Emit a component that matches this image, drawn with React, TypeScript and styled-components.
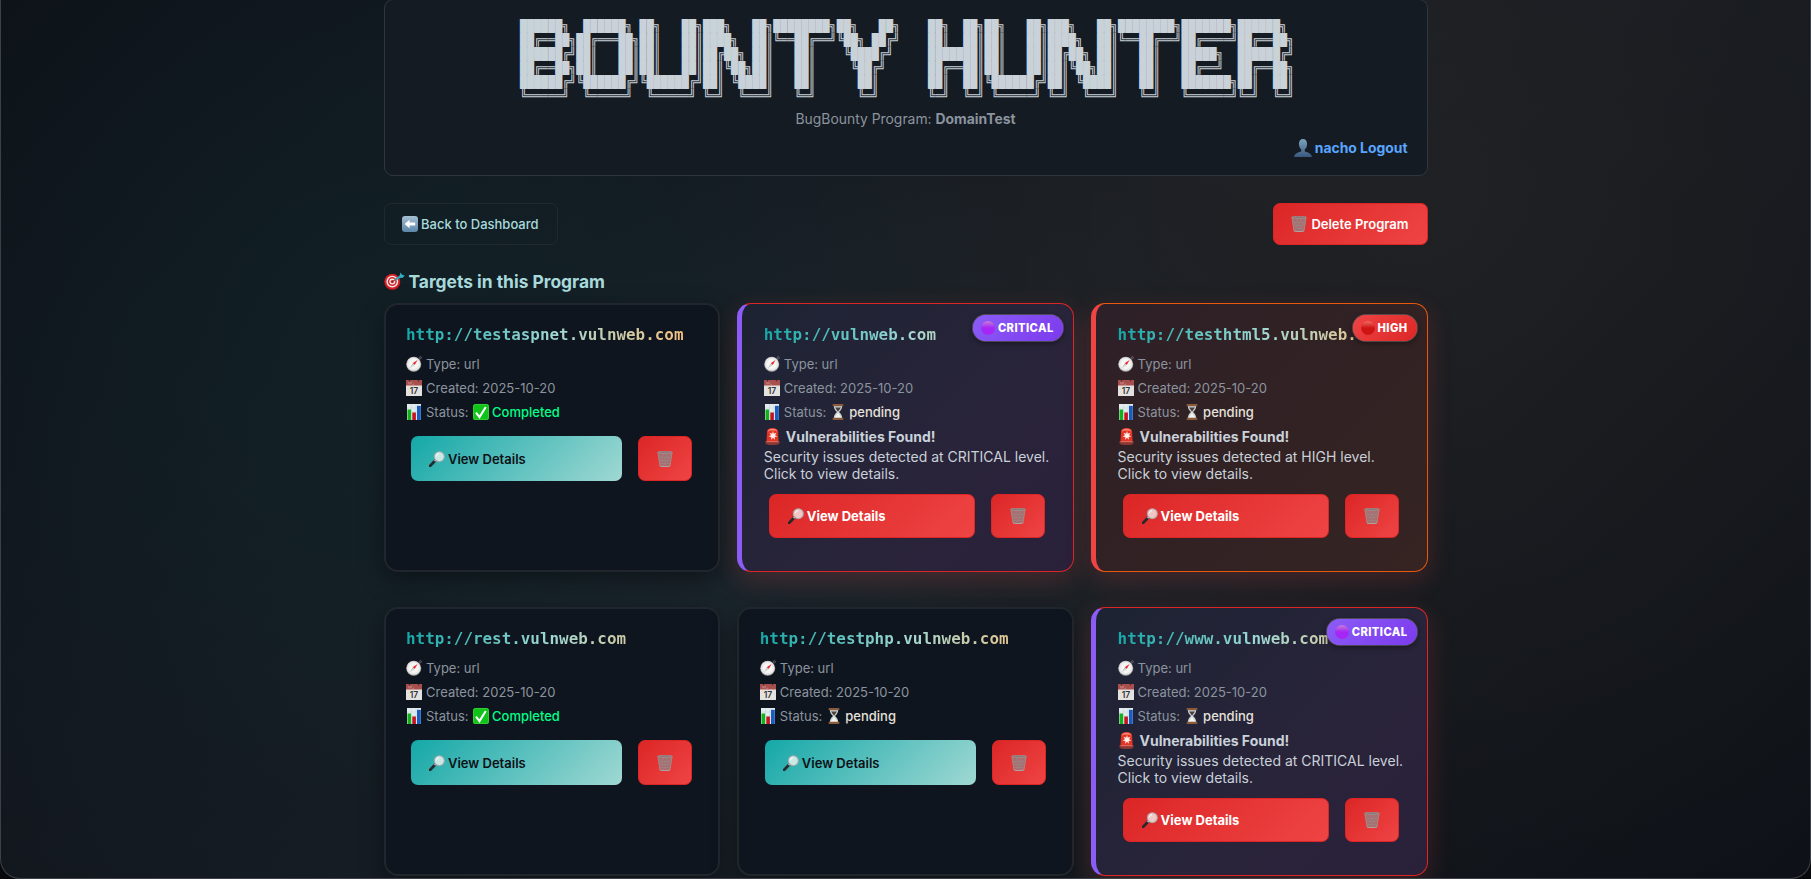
import React from 'react';
import styled, { createGlobalStyle, css } from 'styled-components';

const SANS = 'Inter, "Liberation Sans", sans-serif';
const MONO = '"DejaVu Sans Mono", "Liberation Mono", monospace';

const GlobalStyle = createGlobalStyle`
  * { box-sizing: border-box; }
  html, body { margin: 0; height: 100%; overflow: hidden; background: #08090c; }
  #root { height: 100%; }
`;

const Window = styled.div`
  height: 879px;
  border: 1px solid #3d4147;
  border-top: 0;
  border-radius: 0 0 20px 20px;
  overflow: hidden;
  font-family: ${SANS};
  color: #c9d1d9;
  background:
    radial-gradient(circle at 22% 42%, rgba(20, 170, 165, 0.075) 0%, transparent 42%),
    radial-gradient(circle at 80% 25%, rgba(255, 190, 120, 0.05) 0%, transparent 50%),
    radial-gradient(circle at 50% 80%, rgba(160, 215, 210, 0.05) 0%, transparent 50%),
    linear-gradient(135deg, #0d1117 0%, #161b22 50%, #0d1117 100%);
`;

const Container = styled.main`
  width: 1044px;
  margin: 0 auto;
`;

const Header = styled.header`
  height: 177px;
  margin-top: -1px;
  border: 1px solid #30363d;
  border-radius: 9px;
  background: #151b23;
  display: flex;
  flex-direction: column;
`;

const Banner = styled.pre`
  margin: 18.6px 0 0 135.5px;
  font-family: ${MONO};
  font-size: 11.7px;
  line-height: 14.04px;
  color: #c9d1d9;
`;

const ProgramLine = styled.p`
  margin: 6px 0 0;
  font-size: 13.9px;
  line-height: 20px;
  text-align: center;
  color: #8b949e;
`;

const UserLine = styled.div`
  display: flex;
  justify-content: flex-end;
  align-items: center;
  gap: 3px;
  margin: 9px 19px 0 0;
  height: 21px;
  font-size: 13.9px;
  font-weight: 700;
  color: #58a6ff;
`;

const Toolbar = styled.div`
  display: flex;
  justify-content: space-between;
  margin-top: 27px;
`;

const BackButton = styled.button`
  display: flex;
  align-items: center;
  gap: 3.5px;
  height: 42px;
  padding: 0 18px 0 17px;
  border: 1px solid #21282e;
  border-radius: 7px;
  background: transparent;
  color: #a8dadc;
  font: 500 13px ${SANS};
`;

const redFill = css`
  border: 1px solid #dc2626;
  background: linear-gradient(135deg, #dc2626, #ef4444);
  color: #fff;
`;

const DeleteProgramButton = styled.button`
  ${redFill}
  display: flex;
  align-items: center;
  gap: 4px;
  height: 42px;
  padding: 0 18px 0 17px;
  border-radius: 7px;
  font: 600 13px ${SANS};
`;

const SectionTitle = styled.h2`
  display: flex;
  align-items: center;
  gap: 4px;
  margin: 24px 0 0;
  height: 24px;
  font-size: 17.4px;
  font-weight: 700;
  color: #a8dadc;
`;

const Grid = styled.section`
  display: grid;
  grid-template-columns: repeat(3, 1fr);
  grid-auto-rows: 269px;
  gap: 35px 17.4px;
  margin-top: 9.5px;
`;

type Severity = 'none' | 'critical' | 'high';

const severityStyles = {
  none: css`
    padding: 0 20px 0 20.5px;
    border: 2px solid #21262d;
    background: #0f151e;
    box-shadow: 0 8px 24px rgba(0, 0, 0, 0.4);
  `,
  critical: css`
    padding: 1px 22px 0 21.5px;
    border: 1.5px solid #dc2626;
    border-left: 5px solid #8b5cf6;
    background: linear-gradient(135deg, #1d2333 0%, #29243a 60%, #2a203a 100%);
    box-shadow: 0 8px 26px rgba(239, 68, 68, 0.2);
  `,
  high: css`
    padding: 1px 22px 0 21.5px;
    border: 1.5px solid #ea580c;
    border-left: 5px solid #ef4444;
    background: linear-gradient(135deg, #2e2028 0%, #322223 60%, #352422 100%);
    box-shadow: 0 8px 26px rgba(239, 68, 68, 0.2);
  `,
};

const Card = styled.article<{ $severity: Severity }>`
  position: relative;
  display: flex;
  flex-direction: column;
  border-radius: 14px;
  ${({ $severity }) => severityStyles[$severity]}
`;

const Url = styled.h3`
  margin: 19.5px 0 6px;
  font: 700 15.9px/22px ${MONO};
  white-space: nowrap;
  color: transparent;
  background: linear-gradient(90deg, #14a8a8 0%, #a0d8d3 50%, #ffbe76 100%);
  background-clip: text;
  -webkit-background-clip: text;
`;

const Meta = styled.div`
  display: flex;
  align-items: center;
  gap: 4px;
  height: 24px;
  font-size: 13px;
  color: #8b949e;
`;

const Status = styled.span<{ $done: boolean }>`
  display: flex;
  align-items: center;
  gap: ${({ $done }) => ($done ? 3.5 : 3)}px;
  font-weight: 500;
  color: ${({ $done }) => ($done ? '#00ff88' : '#e6e1dc')};
`;

const AlertTitle = styled.div`
  display: flex;
  align-items: center;
  gap: 5px;
  height: 24px;
  font-size: 14px;
  font-weight: 700;
`;

const AlertText = styled.p`
  margin: 0;
  font-size: 14px;
  line-height: 17px;
`;

const Actions = styled.div`
  display: flex;
  gap: 16px;
  margin: 12px 6px 0 5px;
`;

const ViewButton = styled.button<{ $alert: boolean }>`
  flex: 1;
  display: flex;
  align-items: center;
  gap: 3px;
  height: 45px;
  padding: 0 18px;
  border: 0;
  border-radius: 7px;
  background: linear-gradient(135deg, #14a8a8, #a0d8d3);
  color: #0d1117;
  font: 600 13px ${SANS};
  ${({ $alert }) => $alert && css`${redFill} height: 44px; padding: 0 18px; font-weight: 700;`}
`;

const TrashButton = styled.button<{ $alert: boolean }>`
  ${redFill}
  display: flex;
  align-items: center;
  justify-content: center;
  width: 54px;
  height: ${({ $alert }) => ($alert ? 44 : 45)}px;
  padding: 0;
  border-radius: 7px;
`;

const Badge = styled.span<{ $severity: Severity }>`
  position: absolute;
  top: 10px;
  right: 9px;
  display: flex;
  align-items: center;
  gap: 3px;
  height: 28.5px;
  padding: 0 9px 0 8px;
  border: 1px solid rgba(255, 255, 255, 0.2);
  border-radius: 14px;
  background: ${({ $severity }) =>
    $severity === 'critical'
      ? 'linear-gradient(135deg, #8b5cf6, #7c3aed)'
      : 'linear-gradient(135deg, #ef4444, #dc2626)'};
  background-clip: padding-box;
  background-color: ${({ $severity }) => ($severity === 'critical' ? '#7c3aed' : '#dc2626')};
  box-shadow: 0 2px 5px rgba(0, 0, 0, 0.35);
  color: #fff;
  font-size: 11.2px;
  font-weight: 800;
  letter-spacing: 0.4px;
`;

const Icon = styled.svg<{ $size?: number }>`
  flex: none;
  display: block;
  width: ${({ $size }) => $size ?? 16}px;
  height: ${({ $size }) => $size ?? 16}px;
`;

const PersonIcon = () => (
  <Icon viewBox="0 0 18 18" $size={18}>
    <defs>
      <linearGradient id="person" x1="0" y1="0" x2="0" y2="1">
        <stop offset="0" stopColor="#7ba3bd" />
        <stop offset="1" stopColor="#39597d" />
      </linearGradient>
    </defs>
    <path fill="url(#person)" d="M9 0C6.4 0 4.8 2 4.9 5c.1 2.400 1 4.300 2.300 5.300v1.900c-1 1.100-6.600 1.200-7.100 5.800h17.800c-.5-4.600-6.100-4.700-7.100-5.800v-1.900c1.300-1 2.200-2.900 2.300-5.300C13.200 2 11.600 0 9 0z" />
  </Icon>
);

const BackIcon = () => (
  <Icon viewBox="0 0 16 16">
    <defs>
      <linearGradient id="back" x1="0" y1="0" x2="0" y2="1">
        <stop offset="0" stopColor="#a4bfd2" />
        <stop offset="1" stopColor="#5d86aa" />
      </linearGradient>
    </defs>
    <rect width="16" height="16" rx="3" fill="url(#back)" />
    <path d="M2.600 8l5-4.300v2.900h5.600v2.800H7.600v2.900z" fill="#fff" />
  </Icon>
);

const TargetIcon = () => (
  <Icon viewBox="0 0 21 18" style={{ width: 21, height: 18 }}>
    <circle cx="8.300" cy="10" r="8" fill="#b3141c" />
    <circle cx="8.300" cy="9.500" r="7.600" fill="#d8242b" />
    <circle cx="8.300" cy="9.600" r="5.900" fill="#f3e9e6" />
    <circle cx="8.300" cy="9.600" r="4.500" fill="#d8242b" />
    <circle cx="8.300" cy="9.600" r="3" fill="#f3e9e6" />
    <circle cx="8.300" cy="9.600" r="1.600" fill="#c61d25" />
    <path d="M8.300 9.600l8-5" stroke="#5c3b37" strokeWidth="1" />
    <path d="M11.500 7.600l5-3.200" stroke="#2aa7bd" strokeWidth="2" />
    <path d="M15.300 4.600L16.500.6l1.600 2.200 2.600.8-1.800 2.200-3 .2z" fill="#35a9bf" />
  </Icon>
);

const CompassIcon = () => (
  <Icon viewBox="0 0 16 16">
    <circle cx="14.300" cy="1.700" r="1.100" fill="none" stroke="#777c83" strokeWidth=".7" />
    <circle cx="7.700" cy="8.200" r="7.500" fill="#a9aaab" />
    <circle cx="7.700" cy="8" r="6.800" fill="#e9e9e8" />
    <circle cx="7.700" cy="8" r="5" fill="#f7f6f5" />
    <path d="M11.600 3.900L8.700 9 6.700 7.200z" fill="#e5262b" />
    <path d="M3.800 12.200l2.900-5 2 1.800z" fill="#c9c9c9" />
  </Icon>
);

const CalendarIcon = () => (
  <Icon viewBox="0 0 16 16">
    <rect width="16" height="16" rx=".6" fill="#e4e2df" />
    <path d="M0 0h16v5.500H0z" fill="#a9504f" />
    <path d="M3 2v2.300M5 2v2.300M6.500 4.300h1.200" stroke="#d8aaa7" strokeWidth=".7" />
    <circle cx="3.500" cy=".8" r=".7" fill="#3b2a2c" />
    <circle cx="12.500" cy=".8" r=".7" fill="#3b2a2c" />
    <text x="8" y="14" textAnchor="middle" fontFamily="Inter, sans-serif" fontSize="8.500" fontWeight="600" fill="#333">17</text>
  </Icon>
);

const ChartIcon = () => (
  <Icon viewBox="0 0 16 16">
    <rect x="1" width="14" height="16" fill="#e3edf0" />
    <path d="M1 4h14M1 8h14M1 12h14M5.500 0v16M10 0v16" stroke="#bfd3db" strokeWidth=".5" />
    <rect x="1.500" y="5.500" width="3.600" height="10.500" fill="#12b31a" />
    <rect x="6.300" y="8.500" width="3.600" height="7.500" fill="#c5141d" />
    <rect x="11" y="1.800" width="3.800" height="14.200" fill="#1a5dc0" />
  </Icon>
);

const CheckIcon = () => (
  <Icon viewBox="0 0 16 16">
    <rect width="16" height="16" rx="2.600" fill="#10c318" />
    <rect x=".5" y=".5" width="15" height="15" rx="2.200" fill="none" stroke="#3ad041" strokeWidth=".8" />
    <path d="M3 8.700l3.500 4.400L12.800 3" fill="none" stroke="#fff" strokeWidth="2.100" />
  </Icon>
);

const HourglassIcon = () => (
  <Icon viewBox="0 0 16 16">
    <path d="M3.800 1.500h8.400c0 3.500-1.300 4.600-3.200 6.500 1.900 1.900 3.200 3 3.200 6.500H3.800c0-3.500 1.300-4.600 3.200-6.500-1.900-1.900-3.200-3-3.200-6.500z" fill="#c9d3d6" />
    <path d="M5 3.500h6L8.400 7.200h-.8z" fill="#4d4039" />
    <path d="M8 8.500l3.500 5.500h-7z" fill="#f4f2ec" />
    <rect x="2.600" y="0" width="10.800" height="2.200" rx=".7" fill="#8a5a3c" />
    <rect x="2.600" y="13.800" width="10.800" height="2.200" rx=".7" fill="#8a5a3c" />
  </Icon>
);

const SirenIcon = () => (
  <Icon viewBox="0 0 17 17" $size={17}>
    <path d="M2.500 13.500L3 3.500C3.200 1.200 5 0 8.500 0s5.400 1.200 5.600 3.500l.5 10z" fill="#e33526" />
    <path d="M3.800 4C4 1.800 5.400.8 8.500.8s4.500 1 4.700 3.200l-1.500-1.500H5.300z" fill="#ff8d78" />
    <path d="M1.500 13h14v2.200c0 1-2.500 1.800-7 1.800s-7-.8-7-1.800z" fill="#8b3833" />
    <path d="M2.600 13h11.800v1.200H2.600z" fill="#d9695c" />
    <path d="M9 3l.8 2.800 2.700-1-1.500 2.400 2.400 1.300-2.800.5.400 2.800L9 9.800l-2 2 .4-2.800-2.800-.5L7 7.200 5.500 4.800l2.700 1z" fill="#fff0ec" />
  </Icon>
);

const MagnifierIcon = ({ red }: { red: boolean }) => (
  <Icon viewBox="0 0 16 16">
    <path d="M1 15l5.300-5.500" stroke="#26282a" strokeWidth="2.600" strokeLinecap="round" />
    <path d="M5.600 10.200l1.400-1.400" stroke="#b7bcbe" strokeWidth="1.800" />
    <circle cx="10.300" cy="5.700" r="5" fill={red ? '#f3c6c6' : '#c9e9e7'} stroke="#a5a8aa" strokeWidth="1.100" />
    <path d="M7.300 5.400a3.200 3.200 0 0 1 2.700-2.900" fill="none" stroke="#fff" strokeWidth=".9" />
  </Icon>
);

const TrashIcon = () => (
  <Icon viewBox="0 0 16 16">
    <path d="M.8 1.200h14.400L13 15.200c-1 1-9 1-10 0z" fill="#b0696a" />
    <path d="M2 3l8 12M5.500 3l6.500 10M9 3l4 6M14 3L6 15M10.500 3L4 13M7 3L3 9M2.500 6.500h11M3 9.500h10M3.500 12.500h9" stroke="#94898a" strokeWidth=".6" />
    <path d="M.9 1.300L3 15M15.100 1.300L13 15" stroke="#9b9697" strokeWidth=".8" />
    <ellipse cx="8" cy="1.400" rx="7.500" ry="1.100" fill="#87797a" stroke="#a9a3a3" strokeWidth=".5" />
    <path d="M3 14.900c1.500.9 8.500.9 10 0" fill="none" stroke="#aaa6a6" strokeWidth="1" />
  </Icon>
);

const DotIcon = ({ severity }: { severity: Severity }) => {
  const [top, base] = severity === 'critical' ? ['#c77bd8', '#a526f5'] : ['#ee6a60', '#cf1414'];
  return (
    <Icon viewBox="0 0 14 14" $size={14}>
      <defs>
        <linearGradient id={`dot-${severity}`} x1="0" y1="0" x2="0" y2="1">
          <stop offset="0" stopColor={top} />
          <stop offset=".5" stopColor={base} />
        </linearGradient>
      </defs>
      <circle cx="7" cy="7" r="6.900" fill={`url(#dot-${severity})`} />
    </Icon>
  );
};

const BANNER = [
  '██████╗  ██████╗ ██╗   ██╗███╗   ██╗████████╗██╗   ██╗    ██╗  ██╗██╗   ██╗███╗   ██╗████████╗███████╗██████╗ ',
  '██╔══██╗██╔═══██╗██║   ██║████╗  ██║╚══██╔══╝╚██╗ ██╔╝    ██║  ██║██║   ██║████╗  ██║╚══██╔══╝██╔════╝██╔══██╗',
  '██████╔╝██║   ██║██║   ██║██╔██╗ ██║   ██║    ╚████╔╝     ███████║██║   ██║██╔██╗ ██║   ██║   █████╗  ██████╔╝',
  '██╔══██╗██║   ██║██║   ██║██║╚██╗██║   ██║     ╚██╔╝      ██╔══██║██║   ██║██║╚██╗██║   ██║   ██╔══╝  ██╔══██╗',
  '██████╔╝╚██████╔╝╚██████╔╝██║ ╚████║   ██║      ██║       ██║  ██║╚██████╔╝██║ ╚████║   ██║   ███████╗██║  ██║',
  '╚═════╝  ╚═════╝  ╚═════╝ ╚═╝  ╚═══╝   ╚═╝      ╚═╝       ╚═╝  ╚═╝ ╚═════╝ ╚═╝  ╚═══╝   ╚═╝   ╚══════╝╚═╝  ╚═╝',
].join('\n');

interface Target {
  url: string;
  done: boolean;
  severity: Severity;
}

const TARGETS: Target[] = [
  { url: 'http://testaspnet.vulnweb.com', done: true, severity: 'none' },
  { url: 'http://vulnweb.com', done: false, severity: 'critical' },
  { url: 'http://testhtml5.vulnweb.com', done: false, severity: 'high' },
  { url: 'http://rest.vulnweb.com', done: true, severity: 'none' },
  { url: 'http://testphp.vulnweb.com', done: false, severity: 'none' },
  { url: 'http://www.vulnweb.com', done: false, severity: 'critical' },
];

const TargetCard = ({ url, done, severity }: Target) => {
  const alert = severity !== 'none';
  const level = severity.toUpperCase();
  return (
    <Card $severity={severity}>
      <Url>{url}</Url>
      <Meta><CompassIcon />Type: url</Meta>
      <Meta><CalendarIcon />Created: 2025-10-20</Meta>
      <Meta>
        <ChartIcon />Status:
        <Status $done={done}>
          {done ? <CheckIcon /> : <HourglassIcon />}
          {done ? 'Completed' : 'pending'}
        </Status>
      </Meta>
      {alert && (
        <>
          <AlertTitle><SirenIcon />Vulnerabilities Found!</AlertTitle>
          <AlertText>Security issues detected at {level} level. Click to view details.</AlertText>
        </>
      )}
      <Actions>
        <ViewButton $alert={alert}><MagnifierIcon red={alert} />View Details</ViewButton>
        <TrashButton $alert={alert} aria-label="Delete target"><TrashIcon /></TrashButton>
      </Actions>
      {alert && <Badge $severity={severity}><DotIcon severity={severity} />{level}</Badge>}
    </Card>
  );
};

export default function App() {
  return (
    <>
      <GlobalStyle />
      <Window>
        <Container>
          <Header>
            <Banner>{BANNER}</Banner>
            <ProgramLine>BugBounty Program: <strong>DomainTest</strong></ProgramLine>
            <UserLine><PersonIcon />nacho Logout</UserLine>
          </Header>
          <Toolbar>
            <BackButton><BackIcon />Back to Dashboard</BackButton>
            <DeleteProgramButton><TrashIcon />Delete Program</DeleteProgramButton>
          </Toolbar>
          <SectionTitle><TargetIcon />Targets in this Program</SectionTitle>
          <Grid>
            {TARGETS.map((target) => <TargetCard key={target.url} {...target} />)}
          </Grid>
        </Container>
      </Window>
    </>
  );
}
